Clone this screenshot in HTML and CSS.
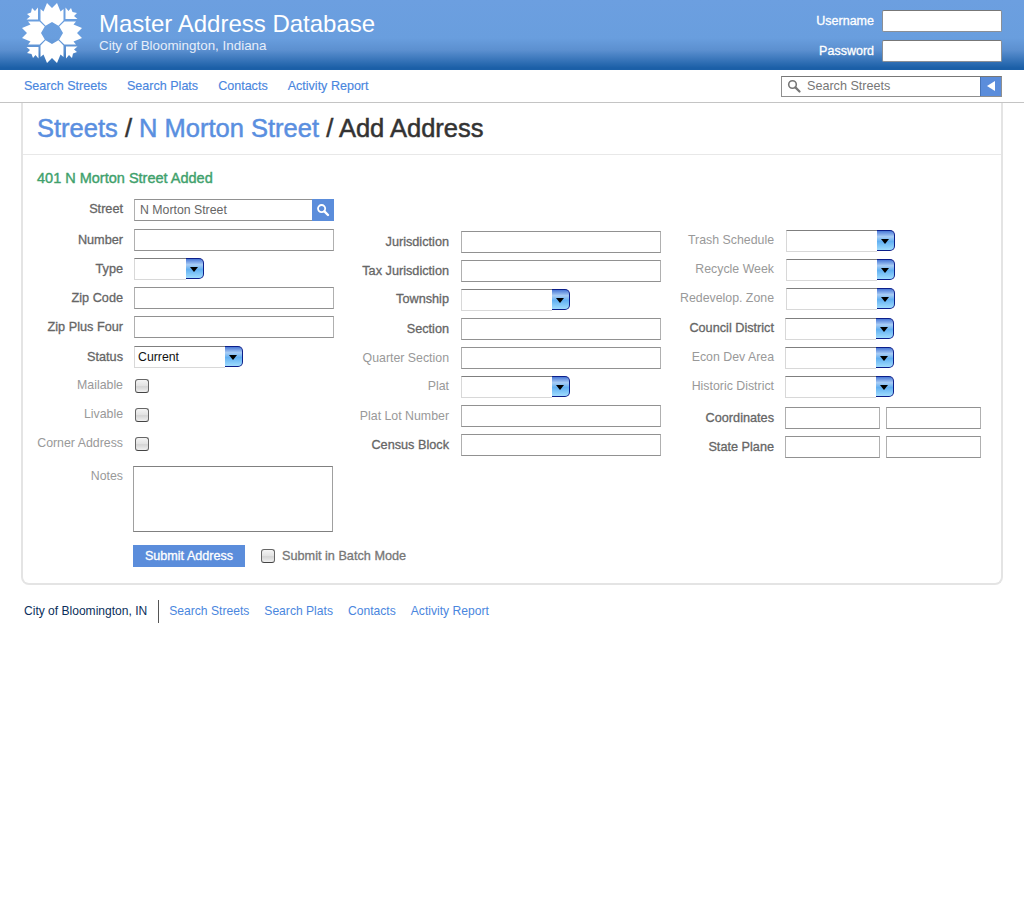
FILE: index.html
```html
<!DOCTYPE html>
<html lang="en">
<head>
<meta charset="utf-8">
<title>Master Address Database</title>
<link rel="stylesheet" href="styles.css">
</head>
<body>
<header class="masthead">
  <svg class="logo" viewBox="-30 -30 60 60" aria-hidden="true">
    <defs>
      <polygon id="arm" points="-6.4,-7.2 -11.5,-12.4 -11.5,-24 -8.5,-21.5 -5,-30 0,-25 5,-30 8.5,-21.5 11.5,-24 11.5,-12.4 6.4,-7.2 0,-11"/>
      <polygon id="cor" points="13.5,-14 13.5,-25.5 16.5,-22 19,-25 20.5,-21 25,-20 22,-17 25.5,-14"/>
    </defs>
    <g fill="#fff">
      <use href="#arm"/><use href="#arm" transform="rotate(90)"/><use href="#arm" transform="rotate(180)"/><use href="#arm" transform="rotate(270)"/>
      <use href="#cor"/><use href="#cor" transform="rotate(90)"/><use href="#cor" transform="rotate(180)"/><use href="#cor" transform="rotate(270)"/>
    </g>
  </svg>
  <div class="brand">
    <div class="brand-title">Master Address Database</div>
    <div class="brand-sub">City of Bloomington, Indiana</div>
  </div>
  <form class="login">
    <label class="login-row">Username <input class="login-input" type="text"></label>
    <label class="login-row">Password <input class="login-input" type="password"></label>
  </form>
</header>

<nav class="mainnav">
  <a href="#">Search Streets</a>
  <a href="#">Search Plats</a>
  <a href="#">Contacts</a>
  <a href="#">Activity Report</a>
  <div class="navsearch">
    <svg class="navsearch-icon" viewBox="0 0 14 14" aria-hidden="true"><circle cx="5.5" cy="5.5" r="3.8" fill="none" stroke="#777" stroke-width="1.6"/><path d="M8.4 8.4 12.5 12.5" stroke="#777" stroke-width="2.2" stroke-linecap="round"/></svg>
    <span class="navsearch-text">Search Streets</span>
    <span class="navsearch-btn"><span class="tri-left"></span></span>
  </div>
</nav>

<main class="card">
  <h1 class="crumbs"><a href="#">Streets</a> / <a href="#">N Morton Street</a> / Add Address</h1>
  <form class="card-body">
    <p class="notice">401 N Morton Street Added</p>
    <div class="columns">
      <div class="col col-a">
        <div class="field"><label class="req">Street</label>
          <div class="combo"><input class="text text-combo" type="text" value="N Morton Street"><span class="combo-btn"><svg viewBox="0 0 14 14" width="14" height="14" aria-hidden="true"><circle cx="5.6" cy="5.6" r="3.6" fill="none" stroke="#fff" stroke-width="1.8"/><path d="M8.4 8.4 12 12" stroke="#fff" stroke-width="2.4" stroke-linecap="round"/></svg></span></div></div>
        <div class="field plus1"><label class="req">Number</label><input class="text" type="text"></div>
        <div class="field"><label class="req">Type</label><div class="sel sel-sm"><span class="sel-val"></span><span class="sel-btn"></span></div></div>
        <div class="field"><label class="req">Zip Code</label><input class="text" type="text"></div>
        <div class="field"><label class="req">Zip Plus Four</label><input class="text" type="text"></div>
        <div class="field plus1"><label class="req">Status</label><div class="sel"><span class="sel-val">Current</span><span class="sel-btn"></span></div></div>
        <div class="field"><label>Mailable</label><input class="check" type="checkbox"></div>
        <div class="field"><label>Livable</label><input class="check" type="checkbox"></div>
        <div class="field"><label>Corner Address</label><input class="check" type="checkbox"></div>
        <div class="field field-notes"><label>Notes</label><textarea class="notes"></textarea></div>
      </div>
      <div class="col col-b">
        <div class="field"><label class="req">Jurisdiction</label><input class="text" type="text"></div>
        <div class="field"><label class="req">Tax Jurisdiction</label><input class="text" type="text"></div>
        <div class="field"><label class="req">Township</label><div class="sel"><span class="sel-val"></span><span class="sel-btn"></span></div></div>
        <div class="field"><label class="req">Section</label><input class="text" type="text"></div>
        <div class="field"><label>Quarter Section</label><input class="text" type="text"></div>
        <div class="field"><label>Plat</label><div class="sel"><span class="sel-val"></span><span class="sel-btn"></span></div></div>
        <div class="field"><label>Plat Lot Number</label><input class="text" type="text"></div>
        <div class="field"><label class="req">Census Block</label><input class="text" type="text"></div>
      </div>
      <div class="col col-c">
        <div class="field shift"><label>Trash Schedule</label><div class="sel"><span class="sel-val"></span><span class="sel-btn"></span></div></div>
        <div class="field shift"><label>Recycle Week</label><div class="sel"><span class="sel-val"></span><span class="sel-btn"></span></div></div>
        <div class="field shift"><label>Redevelop. Zone</label><div class="sel"><span class="sel-val"></span><span class="sel-btn"></span></div></div>
        <div class="field plus1"><label class="req">Council District</label><div class="sel"><span class="sel-val"></span><span class="sel-btn"></span></div></div>
        <div class="field"><label>Econ Dev Area</label><div class="sel"><span class="sel-val"></span><span class="sel-btn"></span></div></div>
        <div class="field"><label>Historic District</label><div class="sel"><span class="sel-val"></span><span class="sel-btn"></span></div></div>
        <div class="field plus2"><label class="req">Coordinates</label><div class="pair"><input class="text text-half" type="text"><input class="text text-half" type="text"></div></div>
        <div class="field"><label class="req">State Plane</label><div class="pair"><input class="text text-half" type="text"><input class="text text-half" type="text"></div></div>
      </div>
    </div>
    <div class="actions">
      <button class="submit" type="button">Submit Address</button>
      <label class="batch"><input class="check" type="checkbox"> Submit in Batch Mode</label>
    </div>
  </form>
</main>

<footer class="foot">
  <span class="foot-org">City of Bloomington, IN</span>
  <a href="#">Search Streets</a>
  <a href="#">Search Plats</a>
  <a href="#">Contacts</a>
  <a href="#">Activity Report</a>
</footer>
</body>
</html>
```
FILE: styles.css
```css
* { box-sizing: border-box; }
html, body { margin: 0; padding: 0; background: #fff; }
body { font-family: "Liberation Sans", Arial, sans-serif; font-size: 12px; color: #333; }
a { text-decoration: none; color: #4a86de; }

/* header */
.masthead {
  height: 70px;
  display: flex;
  align-items: flex-start;
  padding-left: 22px;
  background: linear-gradient(to bottom, #6c9fe0 0, #699ede 38px, #5c90d0 50px, #1b5fa7 68px, #1b5fa7 70px);
  color: #fff;
}
.logo { width: 60px; height: 60px; margin-top: 3px; flex: none; }
.brand { margin-left: 17px; padding-top: 10px; }
.brand-title { font-size: 24px; line-height: 28px; color: #fff; }
.brand-sub { font-size: 13.4px; line-height: 16px; color: #e6eefa; }
.login { margin-left: auto; padding: 10px 22px 0 0; display: flex; flex-direction: column; gap: 8px; }
.login-row { display: flex; align-items: center; justify-content: flex-end; gap: 8px; font-size: 12.5px; color: #fff; -webkit-text-stroke: 0.3px #fff; }
.login-input { width: 120px; height: 22px; border: 1px solid #8a8f96; border-top-color: #777; border-radius: 2px; background: #fff; padding: 0; margin: 0; }

/* main nav */
.mainnav {
  height: 33px;
  display: flex;
  align-items: center;
  gap: 20px;
  padding: 0 22px 0 24px;
  border-bottom: 1px solid #c4c4c4;
  font-size: 12.55px;
  -webkit-text-stroke: 0.15px #4a86de;
}
.navsearch { margin-left: auto; width: 221px; height: 21px; display: flex; align-items: center; border: 1px solid #8f8f8f; border-top-color: #777; background: #fff; -webkit-text-stroke: 0; }
.navsearch-icon { width: 14px; height: 14px; margin-left: 5px; }
.navsearch-text { margin-left: 6px; color: #777; font-size: 12.6px; }
.navsearch-btn { margin-left: auto; width: 21px; height: 19px; background: #5b8ddb; border-left: 1px solid #4774b8; display: flex; align-items: center; justify-content: center; }
.tri-left { width: 0; height: 0; border: 5px solid transparent; border-left: 0; border-right: 8px solid #fff; }

/* card */
.card { margin: 0 21px; height: 482px; border: 2px solid #e4e4e4; border-top: 0; border-radius: 0 0 8px 8px; }
.crumbs { margin: 0; height: 52px; padding: 10px 0 0 14px; font-size: 25.5px; line-height: 31px; font-weight: normal; color: #333; border-bottom: 1px solid #e8e8e8; -webkit-text-stroke: 0.5px #333; }
.crumbs a { color: #5a8fe0; -webkit-text-stroke: 0.5px #5a8fe0; }
.card-body { padding: 0 0 0 14px; }
.notice { margin: 0; padding-top: 15px; height: 44px; line-height: 16px; font-size: 14.5px; color: #3fa16c; -webkit-text-stroke: 0.4px #3fa16c; }
.columns { display: grid; grid-template-columns: 297px 327px 320px; height: 346px; }
.col { display: flex; flex-direction: column; gap: 7px; }
.col-b { padding-top: 32px; }
.col-c { padding-top: 31px; }
.field { display: flex; align-items: center; height: 22px; gap: 11px; }
.field label { flex: none; text-align: right; color: #999; font-size: 12.35px; }
.field label.req { color: #666; font-size: 12.7px; -webkit-text-stroke: 0.3px #666; }
.col-a label { width: 86px; }
.col-b label { width: 115px; }
.col-b .field { gap: 12px; }
.col-c label { width: 113px; }
.plus1 { margin-top: 1px; }
.plus2 { margin-top: 2px; }
.shift .sel { margin-left: 1px; }
.col-a .field:first-child label,
.col-a .field:has(.check) label,
.col-b .field:has(.sel) label,
.col-c .field:has(.sel) label { margin-bottom: 2px; }
.field-notes { margin-top: 4px; height: 66px; align-items: flex-start; }
.field-notes label { padding-top: 3px; }

.text { width: 200px; height: 22px; margin: 0; padding: 0 5px; font: 12.3px "Liberation Sans", Arial, sans-serif; color: #666; background: #fff; border: 1px solid #b0b0b0; border-top-color: #919191; border-bottom-color: #919191; border-radius: 0; }
.text-half { width: 95px; }
.pair { display: flex; gap: 6px; }
.combo { display: flex; width: 200px; height: 22px; }
.text-combo { width: 178px; border-right: 0; }
.combo-btn { width: 22px; height: 22px; background: #5b8ddb; display: flex; align-items: center; justify-content: center; }
.notes { width: 200px; height: 66px; margin: 0 0 0 -1px; padding: 0; border: 1px solid #a0a0a0; border-top-color: #808080; border-bottom-color: #808080; resize: none; background: #fff; }

.sel { display: flex; width: 109px; height: 22px; }
.sel-sm { width: 70px; }
.sel-val { flex: 1; height: 22px; padding-left: 3px; line-height: 21px; font-size: 12.3px; color: #111; background: #fff; border: 1px solid #d8d8d8; border-top: 1px solid #7f7f7f; border-right: 0; }
.sel-btn { position: relative; width: 18px; height: 21px; border: 1px solid #0c1f8a; border-left: 0; border-radius: 0 5px 5px 0; background: linear-gradient(to bottom, #4a78d6 0, #a9cdf5 30%, #62b0f2 55%, #9fdcfd 100%); }
.sel-btn::after { content: ""; position: absolute; left: 4px; top: 8px; border: 4px solid transparent; border-bottom: 0; border-top: 5px solid #000; }

.check { appearance: none; -webkit-appearance: none; flex: none; width: 14px; height: 14px; margin: 0 0 0 1px; border: 1px solid #666; border-bottom-color: #444; border-radius: 3px; background: linear-gradient(to bottom, #f4f4f4, #e2e2e2 50%, #d4d4d4 55%, #f0f0f0); }

.actions { display: flex; align-items: center; padding-left: 96px; height: 22px; margin-top: 0; gap: 16px; }
.submit { width: 112px; height: 22px; border: 0; margin: 0; padding: 0; background: #5b8ddb; color: #fff; font: 12.6px "Liberation Sans", Arial, sans-serif; -webkit-text-stroke: 0.3px #fff; }
.batch { display: flex; align-items: center; gap: 7px; font-size: 12.7px; color: #777; -webkit-text-stroke: 0.3px #777; }
.batch .check { margin: 0; }

/* footer */
.foot { display: flex; align-items: center; height: 52px; font-size: 12.12px; padding-left: 24px; }
.foot-org { font-size: 12.05px; color: #0b2f5c; height: 23px; line-height: 23px; padding-right: 11px; border-right: 1px solid #555; margin-right: -5px; }
.foot a { margin-left: 15px; color: #4a86de; }
.foot-org + a { margin-left: 15px; }
```
